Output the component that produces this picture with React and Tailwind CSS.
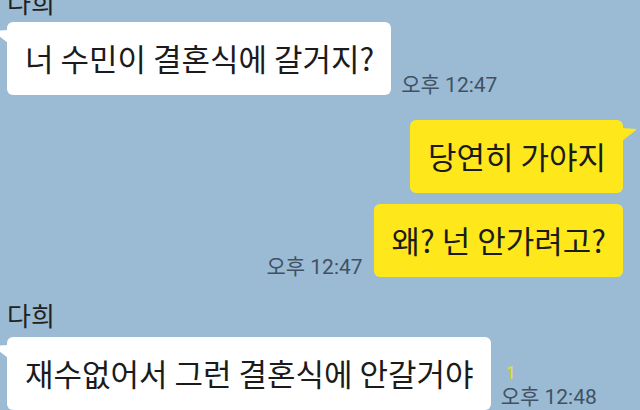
import React from "react";

const messages = [
  { id: 1, from: "다희", text: "너 수민이 결혼식에 갈거지?", time: "오후 12:47", mine: false, tail: true },
  { id: 2, text: "당연히 가야지", mine: true, tail: true },
  { id: 3, text: "왜? 넌 안가려고?", time: "오후 12:47", mine: true, tail: false },
  { id: 4, from: "다희", text: "재수없어서 그런 결혼식에 안갈거야", time: "오후 12:48", mine: false, tail: true, unread: 1 },
];

const TimeStamp = ({ children }) => (
  <span className="block font-['Roboto','Noto_Sans_CJK_KR',sans-serif] text-[21px] leading-[20px] text-[#415163]">
    {children}
  </span>
);

const LeftTail = () => (
  <svg className="absolute left-[-14px] top-[8px]" width="15" height="14" viewBox="0 0 15 14">
    <path d="M15 0 L1 1 Q0.5 1.5 1 2 L15 13 Z" fill="#ffffff" />
  </svg>
);

const RightTail = () => (
  <svg className="absolute right-[-14px] top-[8px]" width="15" height="14" viewBox="0 0 15 14">
    <path d="M0 0 L14 1 Q14.5 1.5 14 2 L0 13 Z" fill="#fee81c" />
  </svg>
);

const Bubble = ({ msg }) => (
  <div
    className={`relative flex h-[73px] items-center rounded-[6px] pl-[18px] pr-[17px] text-[31px] text-[#1b1b1b] ${
      msg.mine ? "bg-[#fee81c]" : "bg-white"
    }`}
  >
    {msg.tail && (msg.mine ? <RightTail /> : <LeftTail />)}
    <span className="whitespace-nowrap">{msg.text}</span>
  </div>
);

export default function App() {
  const [m1, m2, m3, m4] = messages;

  return (
    <div className="h-[410px] w-[640px] overflow-hidden bg-[#9bbbd4] font-['Noto_Sans_CJK_KR',sans-serif]">
      <div className="flex flex-col">
        {/* received */}
        <div className="-mt-[12px] pl-[7px]">
          <div className="h-[28px] text-[26px] leading-[28px] text-[#222]">{m1.from}</div>
          <div className="mt-[6px] flex items-end gap-[10px]">
            <Bubble msg={m1} />
            <div>
              <TimeStamp>{m1.time}</TimeStamp>
            </div>
          </div>
        </div>

        {/* sent */}
        <div className="mt-[25px] flex justify-end pr-[17px]">
          <Bubble msg={m2} />
        </div>
        <div className="mt-[11px] flex items-end justify-end gap-[11px] pr-[17px]">
          <div>
            <TimeStamp>{m3.time}</TimeStamp>
          </div>
          <Bubble msg={m3} />
        </div>

        {/* received */}
        <div className="mt-[24px] pl-[7px]">
          <div className="h-[28px] text-[26px] leading-[28px] text-[#222]">{m4.from}</div>
          <div className="mt-[8px] flex items-end gap-[10px]">
            <Bubble msg={m4} />
            <div className="flex flex-col items-start pb-[3px]">
              <span className="mb-[4px] pl-[5px] font-['Roboto',sans-serif] text-[18px] leading-[20px] text-[#eddc22]">
                {m4.unread}
              </span>
              <TimeStamp>{m4.time}</TimeStamp>
            </div>
          </div>
        </div>
      </div>
    </div>
  );
}
